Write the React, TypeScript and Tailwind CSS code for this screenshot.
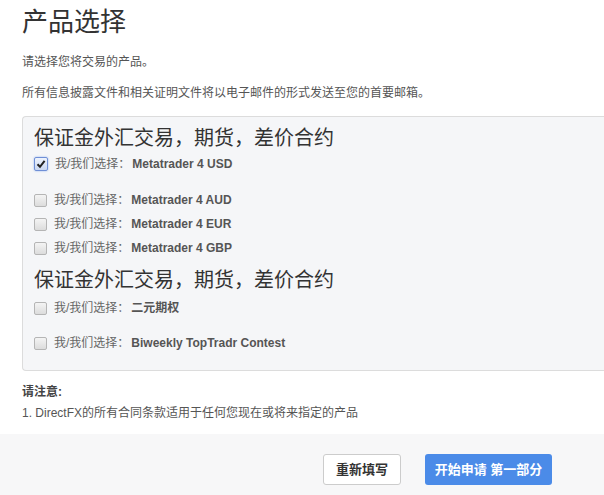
import React from 'react'

const font = { fontFamily: '"Liberation Sans", Arial, "Noto Sans CJK SC", sans-serif' }

function Box({ checked }: { checked?: boolean }) {
  if (checked) {
    return (
      <span className="flex h-[14px] w-[14px] shrink-0 items-center justify-center rounded-[2px] border border-[#6f8fd6] bg-gradient-to-b from-[#eef3fc] to-[#c9d7f2] shadow-[0_0_2px_#8fb0ef]">
        <svg width="10" height="10" viewBox="0 0 10 10">
          <path d="M1.5 5.2 L4 7.8 L8.6 1.8" fill="none" stroke="#222" strokeWidth="2" />
        </svg>
      </span>
    )
  }
  return (
    <span className="h-[13px] w-[13px] shrink-0 rounded-[2px] border border-[#b5b5b5] bg-gradient-to-b from-[#f4f4f4] to-[#dcdcdc]" />
  )
}

function Row({ name, checked, className = '' }: { name: string; checked?: boolean; className?: string }) {
  return (
    <div className={`flex h-[24px] items-center gap-[7px] ${className}`}>
      <Box checked={checked} />
      <span className="text-[12px] text-[#666]">
        我/我们选择：<span className="ml-[2px] font-bold text-[#555]">{name}</span>
      </span>
    </div>
  )
}

export default function App() {
  return (
    <div className="min-h-[495px] w-[604px] overflow-hidden bg-white" style={font}>
      <div className="pl-[22px]">
        <h1 className="pt-[4px] text-[26px] leading-[36px] text-[#333]">产品选择</h1>
        <p className="mt-[13px] text-[12px] leading-[18px] text-[#555]">请选择您将交易的产品。</p>
        <p className="mt-[13px] text-[12px] leading-[18px] text-[#555]">所有信息披露文件和相关证明文件将以电子邮件的形式发送至您的首要邮箱。</p>

        <div className="mt-[14px] h-[255px] rounded-l-[4px] border border-r-0 border-[#dcdcdc] bg-[#f5f6f8] pl-[11px] pt-[7px]">
          <h2 className="text-[20px] leading-[28px] text-[#333]">保证金外汇交易，期货，差价合约</h2>
          <Row name="Metatrader 4 USD" checked />
          <Row name="Metatrader 4 AUD" className="mt-[12px]" />
          <Row name="Metatrader 4 EUR" />
          <Row name="Metatrader 4 GBP" />
          <h2 className="mb-[2px] mt-[6px] text-[20px] leading-[28px] text-[#333]">保证金外汇交易，期货，差价合约</h2>
          <Row name="二元期权" />
          <Row name="Biweekly TopTradr Contest" className="mt-[11px]" />
        </div>

        <p className="mt-[12px] text-[12px] font-bold leading-[18px] text-[#444]">请注意:</p>
        <p className="mt-[3px] text-[12px] leading-[18px] text-[#555]">1. DirectFX的所有合同条款适用于任何您现在或将来指定的产品</p>
      </div>

      <div className="mt-[12px] flex h-[62px] items-start justify-end gap-[24px] bg-[#f7f7f8] pr-[52px] pt-[20px]">
        <button className="h-[31px] w-[78px] rounded-[3px] border border-[#ccc] bg-white text-[13px] font-bold text-[#333]">
          重新填写
        </button>
        <button className="h-[31px] w-[127px] rounded-[3px] bg-[#4b8be8] text-[13px] font-bold text-white">
          开始申请 第一部分
        </button>
      </div>
    </div>
  )
}
